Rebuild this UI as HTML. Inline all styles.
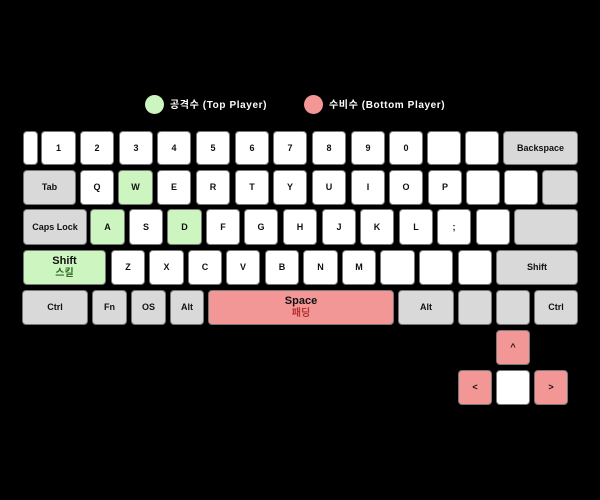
<!DOCTYPE html>
<html><head><meta charset="utf-8"><style>
body{margin:0;width:600px;height:500px;background:#000;position:relative;overflow:hidden;font-family:"Liberation Sans","Noto Sans CJK KR",sans-serif;}
.k{position:absolute;box-sizing:border-box;background:#fff;border:1.5px solid #777;border-radius:4px;display:flex;flex-direction:column;align-items:center;justify-content:center;font-size:9px;font-weight:bold;color:#111;line-height:1.15;}
.g{background:#d9d9d9}.gr{background:#ccf5c0}.r{background:#f39696}
.lg{position:absolute;top:96px;font-size:10px;font-weight:bold;color:#fff;white-space:nowrap;letter-spacing:0.6px}
.dot{position:absolute;top:95px;width:19px;height:19px;border-radius:50%}
</style></head><body>
<div class="dot" style="left:145px;background:#ccf5c0"></div>
<div class="lg" style="left:170px">공격수 (Top Player)</div>
<div class="dot" style="left:304px;background:#f39696"></div>
<div class="lg" style="left:329px">수비수 (Bottom Player)</div>

<div class="k" style="left:23px;top:131px;width:15px;height:34px"></div>
<div class="k" style="left:41px;top:131px;width:35px;height:34px">1</div>
<div class="k" style="left:80px;top:131px;width:34px;height:34px">2</div>
<div class="k" style="left:119px;top:131px;width:34px;height:34px">3</div>
<div class="k" style="left:157px;top:131px;width:34px;height:34px">4</div>
<div class="k" style="left:196px;top:131px;width:34px;height:34px">5</div>
<div class="k" style="left:235px;top:131px;width:34px;height:34px">6</div>
<div class="k" style="left:273px;top:131px;width:34px;height:34px">7</div>
<div class="k" style="left:312px;top:131px;width:34px;height:34px">8</div>
<div class="k" style="left:351px;top:131px;width:34px;height:34px">9</div>
<div class="k" style="left:389px;top:131px;width:34px;height:34px">0</div>
<div class="k" style="left:427px;top:131px;width:34px;height:34px"></div>
<div class="k" style="left:465px;top:131px;width:34px;height:34px"></div>
<div class="k g" style="left:503px;top:131px;width:75px;height:34px">Backspace</div>

<div class="k g" style="left:23px;top:170px;width:53px;height:35px">Tab</div>
<div class="k" style="left:80px;top:170px;width:34px;height:35px">Q</div>
<div class="k gr" style="left:118px;top:170px;width:35px;height:35px">W</div>
<div class="k" style="left:157px;top:170px;width:34px;height:35px">E</div>
<div class="k" style="left:196px;top:170px;width:34px;height:35px">R</div>
<div class="k" style="left:235px;top:170px;width:34px;height:35px">T</div>
<div class="k" style="left:273px;top:170px;width:34px;height:35px">Y</div>
<div class="k" style="left:312px;top:170px;width:34px;height:35px">U</div>
<div class="k" style="left:351px;top:170px;width:34px;height:35px">I</div>
<div class="k" style="left:389px;top:170px;width:34px;height:35px">O</div>
<div class="k" style="left:428px;top:170px;width:34px;height:35px">P</div>
<div class="k" style="left:466px;top:170px;width:34px;height:35px"></div>
<div class="k" style="left:504px;top:170px;width:34px;height:35px"></div>
<div class="k g" style="left:542px;top:170px;width:36px;height:35px"></div>

<div class="k g" style="left:23px;top:209px;width:64px;height:36px">Caps Lock</div>
<div class="k gr" style="left:90px;top:209px;width:35px;height:36px">A</div>
<div class="k" style="left:129px;top:209px;width:34px;height:36px">S</div>
<div class="k gr" style="left:167px;top:209px;width:35px;height:36px">D</div>
<div class="k" style="left:206px;top:209px;width:34px;height:36px">F</div>
<div class="k" style="left:244px;top:209px;width:34px;height:36px">G</div>
<div class="k" style="left:283px;top:209px;width:34px;height:36px">H</div>
<div class="k" style="left:322px;top:209px;width:34px;height:36px">J</div>
<div class="k" style="left:360px;top:209px;width:34px;height:36px">K</div>
<div class="k" style="left:399px;top:209px;width:34px;height:36px">L</div>
<div class="k" style="left:437px;top:209px;width:34px;height:36px">;</div>
<div class="k" style="left:476px;top:209px;width:34px;height:36px"></div>
<div class="k g" style="left:514px;top:209px;width:64px;height:36px"></div>

<div class="k gr" style="left:23px;top:250px;width:83px;height:35px;font-size:11px">Shift<span style="color:#2f6b22;font-size:10px">스킬</span></div>
<div class="k" style="left:111px;top:250px;width:34px;height:35px">Z</div>
<div class="k" style="left:149px;top:250px;width:35px;height:35px">X</div>
<div class="k" style="left:188px;top:250px;width:34px;height:35px">C</div>
<div class="k" style="left:226px;top:250px;width:34px;height:35px">V</div>
<div class="k" style="left:265px;top:250px;width:34px;height:35px">B</div>
<div class="k" style="left:303px;top:250px;width:35px;height:35px">N</div>
<div class="k" style="left:342px;top:250px;width:34px;height:35px">M</div>
<div class="k" style="left:380px;top:250px;width:35px;height:35px"></div>
<div class="k" style="left:419px;top:250px;width:34px;height:35px"></div>
<div class="k" style="left:458px;top:250px;width:34px;height:35px"></div>
<div class="k g" style="left:496px;top:250px;width:82px;height:35px">Shift</div>

<div class="k g" style="left:22px;top:290px;width:66px;height:35px">Ctrl</div>
<div class="k g" style="left:92px;top:290px;width:35px;height:35px">Fn</div>
<div class="k g" style="left:131px;top:290px;width:35px;height:35px">OS</div>
<div class="k g" style="left:170px;top:290px;width:34px;height:35px">Alt</div>
<div class="k r" style="left:208px;top:290px;width:186px;height:35px;font-size:11px">Space<span style="color:#b83232;font-size:10px">패딩</span></div>
<div class="k g" style="left:398px;top:290px;width:56px;height:35px">Alt</div>
<div class="k g" style="left:458px;top:290px;width:34px;height:35px"></div>
<div class="k g" style="left:496px;top:290px;width:34px;height:35px"></div>
<div class="k g" style="left:534px;top:290px;width:44px;height:35px">Ctrl</div>

<div class="k r" style="left:496px;top:330px;width:34px;height:35px">^</div>
<div class="k r" style="left:458px;top:370px;width:34px;height:35px">&lt;</div>
<div class="k" style="left:496px;top:370px;width:34px;height:35px"></div>
<div class="k r" style="left:534px;top:370px;width:34px;height:35px">&gt;</div>
</body></html>
